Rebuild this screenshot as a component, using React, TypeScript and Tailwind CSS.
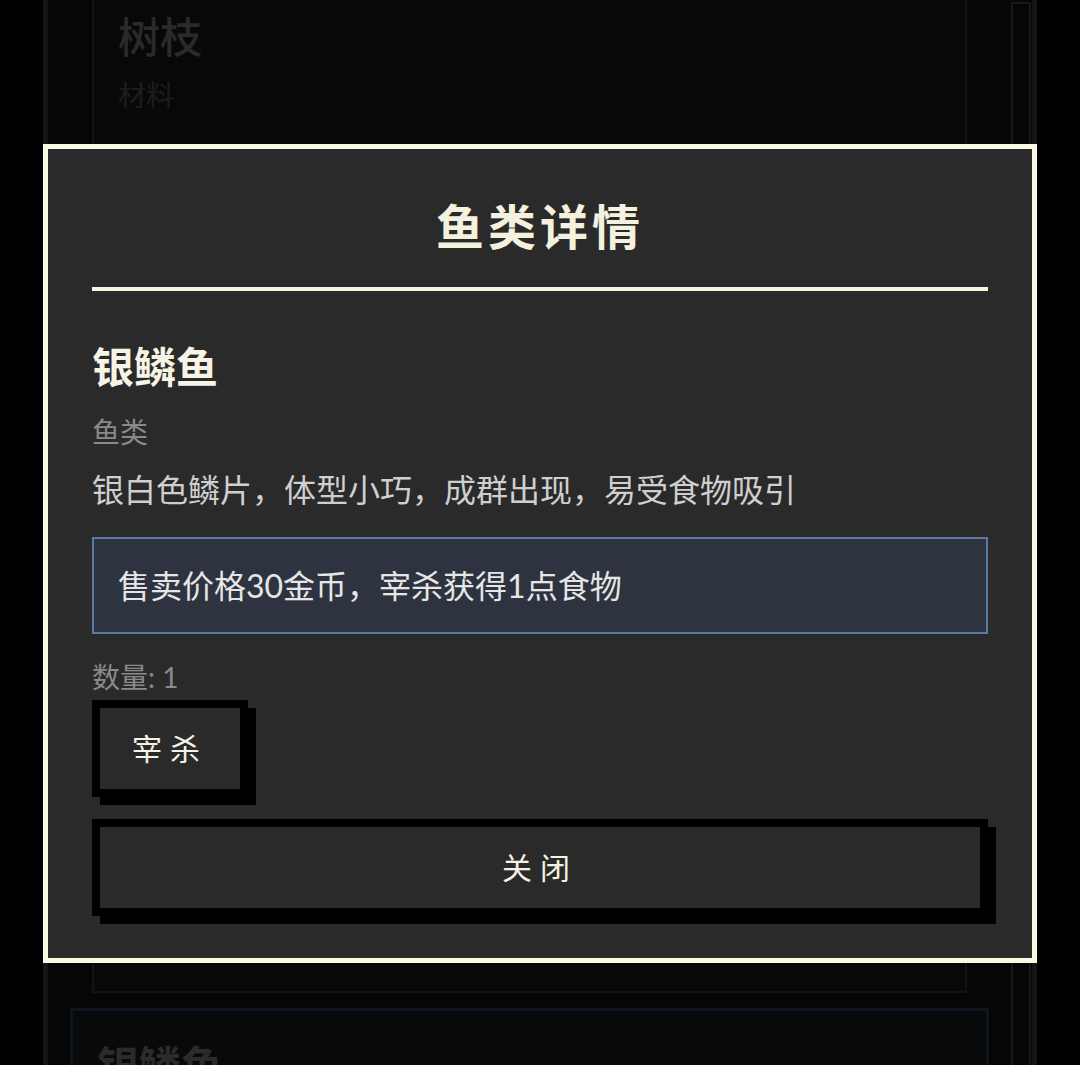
import React from "react";

const FONT = "font-['Lato','Noto_Sans_CJK_SC',sans-serif]";

// Background list card (dimmed under the overlay)
function ItemCard({
  name,
  type,
  highlight,
  className,
}: {
  name: string;
  type: string;
  highlight?: boolean;
  className?: string;
}) {
  return (
    <div
      className={`flex shrink-0 flex-col px-6 ${
        highlight
          ? "border-[3px] border-[#46699a] bg-[#2c2f36]"
          : "border-2 border-[#5e5e5e] bg-[#2a2a2a]"
      } ${className ?? ""}`}
    >
      <h3
        className={`text-[42px] leading-[59px] ${
          highlight ? "font-bold text-[#d8d8d8]" : "font-medium text-[#cfcfcf]"
        }`}
      >
        {name}
      </h3>
      <p className="mt-[8px] text-[28px] leading-[40px] text-[#8c8c8c]">
        {type}
      </p>
    </div>
  );
}

export default function App() {
  return (
    <div className={`relative h-[1065px] overflow-hidden bg-black ${FONT}`}>
      {/* Page behind the dialog */}
      <div className="mx-[43px] flex h-[1065px] border-x-[5px] border-[#6a6a6a] bg-[#222222]">
        <div className="flex flex-1 flex-col px-[44px]">
          <ItemCard
            name="树枝"
            type="材料"
            className="-mt-[20px] h-[1013px] pt-[26px]"
          />
          <ItemCard
            name="银鳞鱼"
            type="鱼类"
            highlight
            className="-mx-[22px] mt-[15px] h-[200px] pt-[26px]"
          />
        </div>
        <div className="mr-[1px] mt-[2px] h-[1100px] w-[20px] shrink-0 border-2 border-[#7a7a7a]" />
      </div>

      {/* Overlay */}
      <div className="absolute inset-0 bg-black/80" />

      {/* Dialog */}
      <div className="absolute inset-0 flex justify-center pt-[144px]">
        <div className="flex h-fit w-[994px] flex-col border-[5px] border-[#fbf9e6] bg-[#2a2a2a] px-[44px] pb-[42px] pt-[42px]">
          <h2 className="border-b-4 border-[#f6f3df] pb-[24px] text-center text-[48px] font-semibold leading-[72px] tracking-[4px] text-[#f4f1de]">
            鱼类详情
          </h2>

          <h3 className="mt-[48px] text-[42px] font-bold leading-[56px] text-[#f6f4e6]">
            银鳞鱼
          </h3>
          <p className="mt-[17px] text-[28px] leading-[40px] text-[#8a8a8a]">
            鱼类
          </p>
          <p className="mt-[14px] text-[32px] leading-[48px] text-[#cfcfcf]">
            银白色鳞片，体型小巧，成群出现，易受食物吸引
          </p>

          <div className="mt-[23px] border-2 border-[#5b7ba6] bg-[#2e3340] px-[24px] py-[23px] text-[32px] leading-[47px] text-[#e6e6e6]">
            售卖价格30金币，宰杀获得1点食物
          </div>

          <p className="mt-[23px] text-[28px] leading-[40px] text-[#8a8a8a]">
            数量: 1
          </p>

          <div className="mt-[3px] flex">
            <button className="h-[97px] w-[156px] border-[8px] border-black bg-[#2a2a2a] text-[30px] leading-[45px] tracking-[8px] text-[#f4f2e4] shadow-[8px_8px_0_#000]">
              宰杀
            </button>
          </div>

          <button className="mt-[22px] h-[97px] w-full border-[8px] border-black bg-[#2a2a2a] text-[30px] leading-[45px] tracking-[8px] text-[#f4f2e4] shadow-[8px_8px_0_#000]">
            关闭
          </button>
        </div>
      </div>
    </div>
  );
}
